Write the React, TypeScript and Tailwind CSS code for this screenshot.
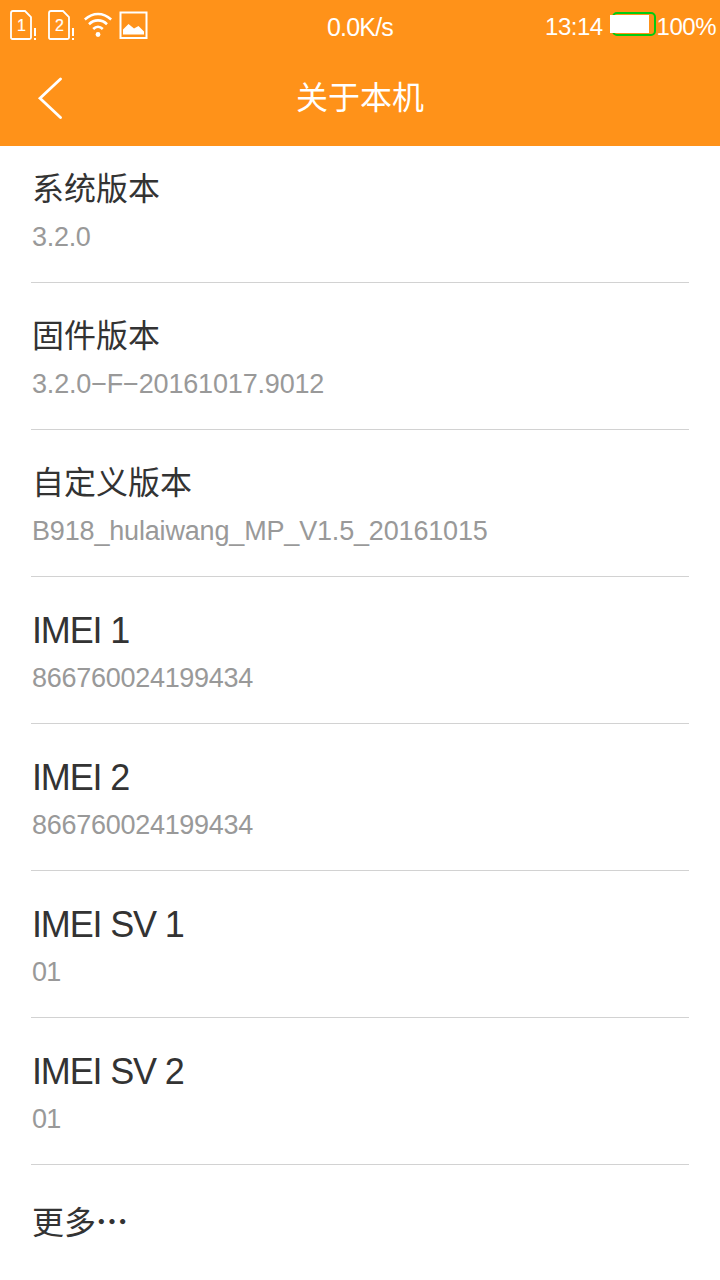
import clsx from "clsx";

const rows = [
  { label: "系统版本", value: "3.2.0", cjk: true, tracking: "tracking-[-0.3px]" },
  { label: "固件版本", value: "3.2.0−F−20161017.9012", cjk: true, tracking: "tracking-[-0.17px]" },
  { label: "自定义版本", value: "B918_hulaiwang_MP_V1.5_20161015", cjk: true, tracking: "tracking-[-0.17px]" },
  { label: "IMEI 1", value: "866760024199434", tracking: "tracking-[-0.28px]" },
  { label: "IMEI 2", value: "866760024199434", tracking: "tracking-[-0.28px]" },
  { label: "IMEI SV 1", value: "01", tracking: "tracking-[-0.8px]" },
  { label: "IMEI SV 2", value: "01", tracking: "tracking-[-0.8px]" },
];

function SimIcon({ slot }: { slot: string }) {
  return (
    <svg width="28" height="32" viewBox="0 0 28 32" fill="none">
      <path d="M4 2h12l6 6V28.5q0 1.5-1.5 1.5h-17Q2 30 2 28.5V4q0-2 2-2z" stroke="#fff" strokeWidth="1.8" />
      <text
        x="12"
        y="22"
        fill="#fff"
        stroke="#fff"
        strokeWidth="0.2"
        fontSize="16"
        textAnchor="middle"
        className="font-['Liberation_Sans',sans-serif]"
      >
        {slot}
      </text>
      <path d="M26 19v8M26 29v2" stroke="#fff" strokeWidth="2" />
    </svg>
  );
}

function WifiIcon() {
  return (
    <svg width="28" height="26" viewBox="0 0 28 26" fill="none" stroke="#fff" strokeWidth="2.6">
      <path d="M0.8 7.5Q7 2 14 2t13.2 5.5" />
      <path d="M5 12.2Q9 8.4 14 8.4t9 3.8" />
      <path d="M9.2 17Q11.5 14.8 14 14.8t4.8 2.2" />
      <circle cx="14" cy="22.5" r="2.4" fill="#fff" stroke="none" />
    </svg>
  );
}

function PictureIcon() {
  return (
    <svg width="30" height="28" viewBox="0 0 30 28" fill="none">
      <path d="M1.500 1.500h26v25.500h-26z" stroke="#fff" strokeWidth="2" />
      <path d="M4 23.500v-5l5.500-5.500 5.500 4.500 4.500-2.500 5.500 5.500v3z" fill="#fff" />
    </svg>
  );
}

function BatteryIcon() {
  return (
    <svg width="48" height="26" viewBox="0 0 48 26">
      <rect x="4" y="2" width="42" height="22" rx="4" fill="none" stroke="#0c1" strokeWidth="2" />
      <rect x="1" y="4" width="39" height="18" fill="#fff" />
    </svg>
  );
}

function StatusBar() {
  return (
    <div className="grid h-[50px] grid-cols-[1fr_auto_1fr] text-[25px] leading-[54px] tracking-[-0.8px]">
      <div className="flex pl-[9px] pt-[9px]">
        <SimIcon slot="1" />
        <div className="ml-[10px]">
          <SimIcon slot="2" />
        </div>
        <div className="ml-[9px] pt-[3px]">
          <WifiIcon />
        </div>
        <div className="ml-[7px] pt-[2px]">
          <PictureIcon />
        </div>
      </div>
      <span>0.0K/s</span>
      <div className="flex justify-end pr-[4px] text-[24px] tracking-[-0.5px]">
        <span>13:14</span>
        <div className="ml-[6px] pt-[11px]">
          <BatteryIcon />
        </div>
        <span>100%</span>
      </div>
    </div>
  );
}

function Header() {
  return (
    <header className="h-[146px] bg-[#ff9219] text-white">
      <StatusBar />
      <div className="grid h-24 grid-cols-[1fr_auto_1fr] items-center">
        <svg width="26" height="42" viewBox="0 0 26 42" fill="none" className="ml-[37px]">
          <path d="M23.5 2L3 21.2 23.5 40.5" stroke="#fff" strokeWidth="2.8" strokeLinecap="round" />
        </svg>
        <h1 className="text-[32px] leading-[46px]">关于本机</h1>
      </div>
    </header>
  );
}

export default function App() {
  return (
    <div className="h-[1280px] w-[720px] overflow-hidden bg-white font-['Liberation_Sans','Noto_Sans_CJK_SC',sans-serif]">
      <Header />
      <main className="-mt-[10px] px-[31px]">
        {rows.map((row) => (
          <div key={row.label} className="h-[147px] border-b border-[#d2d2d2] pl-px pt-[30px]">
            <div
              className={clsx(
                "h-[46px] text-[#333]",
                row.cjk ? "text-[32px] leading-[46px]" : "text-[36px] leading-[48px] tracking-[-1.15px]"
              )}
            >
              {row.label}
            </div>
            <div className={clsx("mt-[9px] h-8 text-[27px] leading-8 text-[#999]", row.tracking)}>{row.value}</div>
          </div>
        ))}
        <div className="pl-px pt-[35px] text-[32px] leading-[46px] text-[#333]">
          更多<span className="font-bold">⋯</span>
        </div>
      </main>
    </div>
  );
}
